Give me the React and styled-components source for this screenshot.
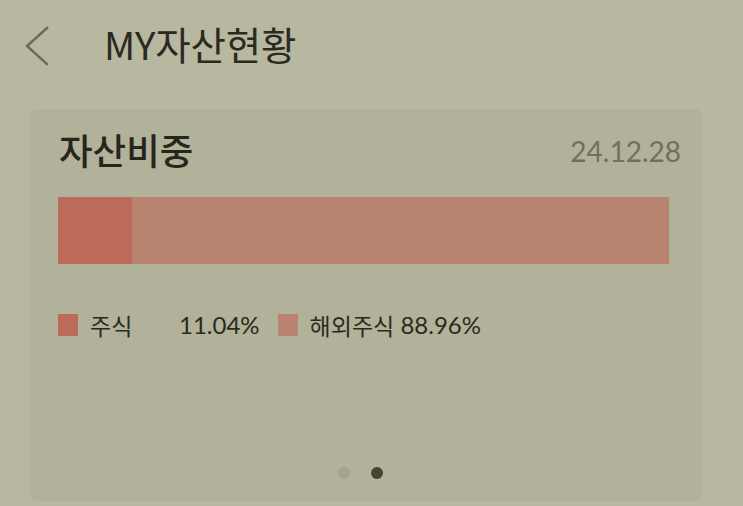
import React from "react";
import styled, { createGlobalStyle } from "styled-components";

const Global = createGlobalStyle`
  html, body { margin: 0; padding: 0; background: #b8b7a0; overflow: hidden; }
  body { font-family: "Noto Sans CJK KR", "Noto Sans", sans-serif; }
`;

const Page = styled.div`
  width: 743px;
  height: 506px;
  background: #b8b7a0;
  display: flex;
  flex-direction: column;
`;

const Header = styled.header`
  height: 91px;
  display: flex;
  align-items: center;
  padding-left: 25px;
  gap: 53px;
`;

const BackButton = styled.button`
  background: none;
  border: 0;
  padding: 0;
  width: 26px;
  height: 40px;
  display: flex;
  align-items: center;
  cursor: pointer;
`;

const Title = styled.h1`
  margin: 0 0 4px;
  font-family: "Noto Sans CJK KR", sans-serif;
  font-weight: 400;
  font-size: 38.5px;
  line-height: 1;
  color: #2a2a1e;
  letter-spacing: -0.2px;
`;

const Card = styled.section`
  margin: 18px 41px 0 30px;
  height: 392px;
  background: #b2b199;
  border-radius: 8px;
  padding: 23px 21px 22px 28px;
  box-sizing: border-box;
  display: flex;
  flex-direction: column;
`;

const CardHead = styled.div`
  display: flex;
  align-items: center;
  justify-content: space-between;
`;

const CardTitle = styled.h2`
  margin: 0 0 0 1px;
  font-family: "Noto Sans CJK KR", sans-serif;
  font-weight: 500;
  font-size: 36.5px;
  line-height: 1;
  color: #26261a;
`;

const DateText = styled.span`
  font-family: Lato, "Noto Sans", sans-serif;
  font-size: 28px;
  line-height: 1;
  color: #717159;
  margin-top: 2px;
`;

const Bar = styled.div`
  margin-top: 28px;
  width: 611px;
  height: 67px;
  display: flex;
`;

const Segment = styled.div`
  height: 100%;
  background: ${(p) => p.$color};
  flex: ${(p) => (p.$grow ? "1 1 auto" : "0 0 auto")};
`;

const Legend = styled.ul`
  list-style: none;
  margin: 50px 0 0;
  padding: 0;
  display: flex;
  align-items: center;
  font-size: 23px;
  line-height: 22px;
  color: #2a2a1e;
`;

const LegendItem = styled.li`
  display: flex;
  align-items: center;
  margin-right: 18px;
`;

const Swatch = styled.span`
  width: 20px;
  height: 22px;
  background: ${(p) => p.$color};
  margin-right: 12px;
`;

const Label = styled.span`
  font-family: "Noto Sans CJK KR", sans-serif;
  min-width: ${(p) => p.$min || 0}px;
`;

const Value = styled.span`
  font-family: Lato, "Noto Sans", sans-serif;
  font-size: 24px;
`;

const Dots = styled.div`
  margin-top: auto;
  display: flex;
  gap: 21px;
  padding-left: 280px;
`;

const Dot = styled.span`
  width: 12px;
  height: 12px;
  border-radius: 50%;
  background: ${(p) => (p.$active ? "#45442f" : "#a4a38e")};
`;

const data = [
  { label: "주식", value: "11.04%", color: "#bd6b5a", width: 74, min: 89 },
  { label: "해외주식", value: "88.96%", color: "#b8836f", min: 0 },
];

export default function App() {
  return (
    <Page>
      <Global />
      <Header>
        <BackButton aria-label="back">
          <svg width="24" height="40" viewBox="0 0 24 40" fill="none">
            <polyline
              points="22,2 2,20 22,38"
              stroke="#6a6a56"
              strokeWidth="2.4"
              strokeLinecap="square"
              strokeLinejoin="miter"
            />
          </svg>
        </BackButton>
        <Title>MY자산현황</Title>
      </Header>
      <Card>
        <CardHead>
          <CardTitle>자산비중</CardTitle>
          <DateText>24.12.28</DateText>
        </CardHead>
        <Bar>
          {data.map((d) => (
            <Segment
              key={d.label}
              $color={d.color}
              $grow={!d.width}
              style={d.width ? { width: d.width } : undefined}
            />
          ))}
        </Bar>
        <Legend>
          {data.map((d) => (
            <LegendItem key={d.label}>
              <Swatch $color={d.color} />
              <Label $min={d.min}>{d.label}</Label>
              <Value>{d.min ? d.value : "\u00a0" + d.value}</Value>
            </LegendItem>
          ))}
        </Legend>
        <Dots>
          <Dot />
          <Dot $active />
        </Dots>
      </Card>
    </Page>
  );
}
